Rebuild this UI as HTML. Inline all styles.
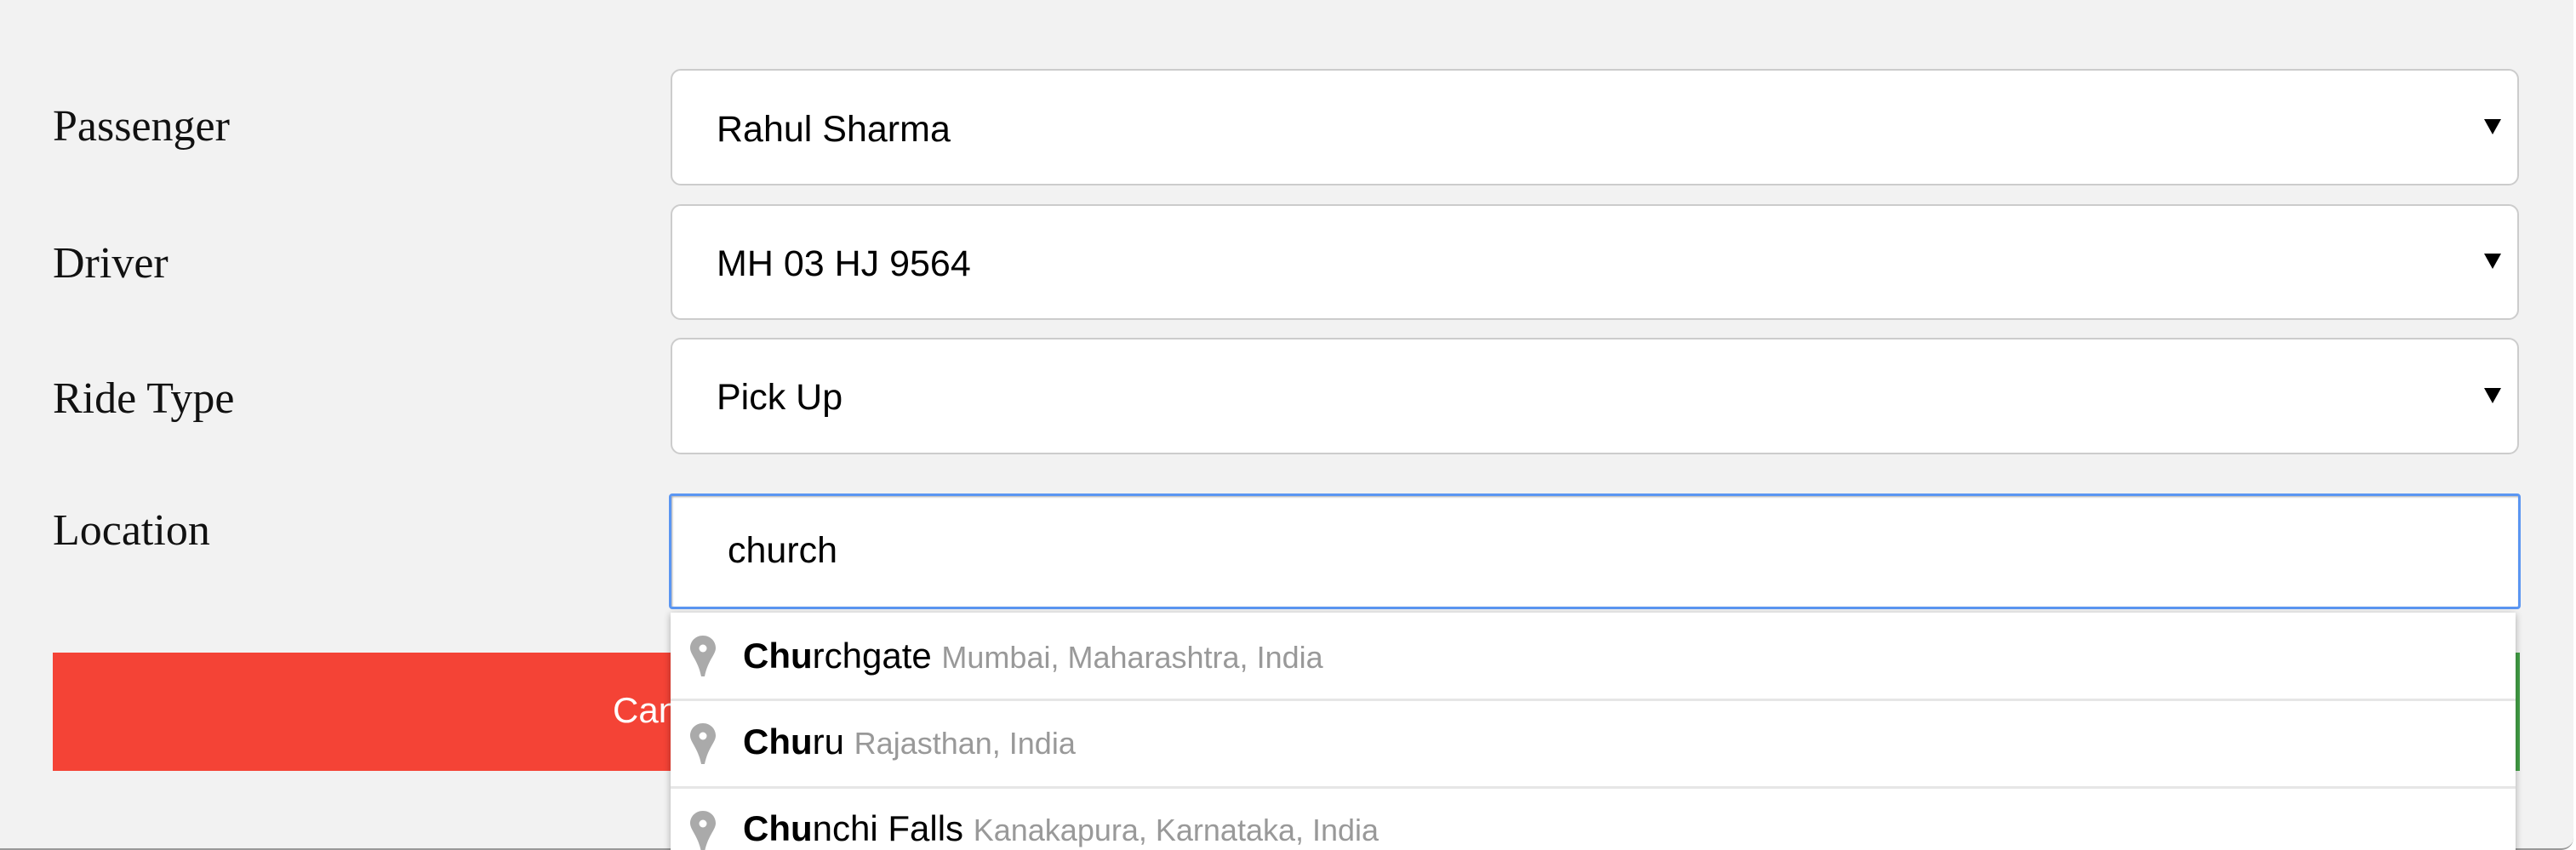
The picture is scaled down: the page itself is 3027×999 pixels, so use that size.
<!DOCTYPE html>
<html><head><meta charset="utf-8">
<style>
html,body{margin:0;padding:0;width:3027px;height:999px;background:#fff;overflow:hidden;position:relative}
.cont{position:absolute;left:0;top:0;width:3024px;height:997px;background:#f2f2f2;border-bottom:2px solid #999;border-radius:0 0 14px 0}
.lbl{position:absolute;left:62px;font-family:"Liberation Serif",serif;font-size:52px;line-height:52px;color:#111}
.sel{position:absolute;left:788px;width:2172px;background:#fff;border:2px solid #ccc;border-radius:12px;box-sizing:border-box}
.stxt{position:absolute;left:842px;font-family:"Liberation Sans",sans-serif;font-size:43px;line-height:43px;color:#000}
.arr{position:absolute;left:2919px;width:0;height:0;border-left:10px solid transparent;border-right:10px solid transparent;border-top:18px solid #000}
.inp{position:absolute;left:786px;top:580px;width:2176px;height:136px;box-sizing:border-box;background:#fff;border:3px solid #5b96f2;border-radius:4px;box-shadow:inset 1px 1px 2px #aaa}
.btn{position:absolute;top:767px;height:139px}
.dd{position:absolute;left:788px;top:720px;width:2168px;height:290px;background:#fff;box-shadow:0 2px 8px rgba(0,0,0,.3)}
.row{position:absolute;left:0;width:2168px;border-top:3px solid #e6e6e6}
.it{position:absolute;left:873px;font-family:"Liberation Sans",sans-serif;font-size:42px;line-height:42px;color:#000;white-space:nowrap}
.it b{font-weight:bold}
.it span{color:#999;font-size:36px}
.pin{position:absolute;left:811px;width:30px;height:48px}
</style></head><body>
<div class="cont"></div>

<div class="lbl" style="top:123px">Passenger</div>
<div class="lbl" style="top:284px">Driver</div>
<div class="lbl" style="top:443px">Ride Type</div>
<div class="lbl" style="top:598px">Location</div>

<div class="sel" style="top:81px;height:137px"></div>
<div class="sel" style="top:240px;height:136px"></div>
<div class="sel" style="top:397px;height:137px"></div>
<div class="stxt" style="top:131px">Rahul Sharma</div>
<div class="stxt" style="top:289px">MH 03 HJ 9564</div>
<div class="stxt" style="top:446px">Pick Up</div>
<div class="arr" style="top:140px"></div>
<div class="arr" style="top:298px"></div>
<div class="arr" style="top:456px"></div>

<div class="inp"></div>
<div class="stxt" style="left:855px;top:626px">church</div>

<div class="btn" style="left:62px;width:1443px;background:#f44336"></div>
<div class="btn" style="left:1525px;width:1436px;background:#43a047"></div>
<div class="stxt" style="left:720px;top:814px;color:#fff;font-size:42px;line-height:42px">Cancel</div>
<div class="stxt" style="left:2200px;top:814px;color:#fff;font-size:42px;line-height:42px">Save</div>

<div class="dd">
  <div class="row" style="top:101px"></div>
  <div class="row" style="top:204px"></div>
</div>
<svg class="pin" style="top:747px" viewBox="0 0 30 48"><path d="M15 0C6.5 0 0 6.5 0 14.5c0 8 9 14 13 33.5h4C21 28.5 30 22.5 30 14.5 30 6.5 23.5 0 15 0z" fill="#aaa"/><circle cx="15" cy="15" r="4.5" fill="#fff"/></svg>
<svg class="pin" style="top:850px" viewBox="0 0 30 48"><path d="M15 0C6.5 0 0 6.5 0 14.5c0 8 9 14 13 33.5h4C21 28.5 30 22.5 30 14.5 30 6.5 23.5 0 15 0z" fill="#aaa"/><circle cx="15" cy="15" r="4.5" fill="#fff"/></svg>
<svg class="pin" style="top:953px" viewBox="0 0 30 48"><path d="M15 0C6.5 0 0 6.5 0 14.5c0 8 9 14 13 33.5h4C21 28.5 30 22.5 30 14.5 30 6.5 23.5 0 15 0z" fill="#aaa"/><circle cx="15" cy="15" r="4.5" fill="#fff"/></svg>
<div class="it" style="top:750px"><b>Chu</b>rchgate <span>Mumbai, Maharashtra, India</span></div>
<div class="it" style="top:851px"><b>Chu</b>ru <span>Rajasthan, India</span></div>
<div class="it" style="top:953px"><b>Chu</b>nchi Falls <span>Kanakapura, Karnataka, India</span></div>
</body></html>
